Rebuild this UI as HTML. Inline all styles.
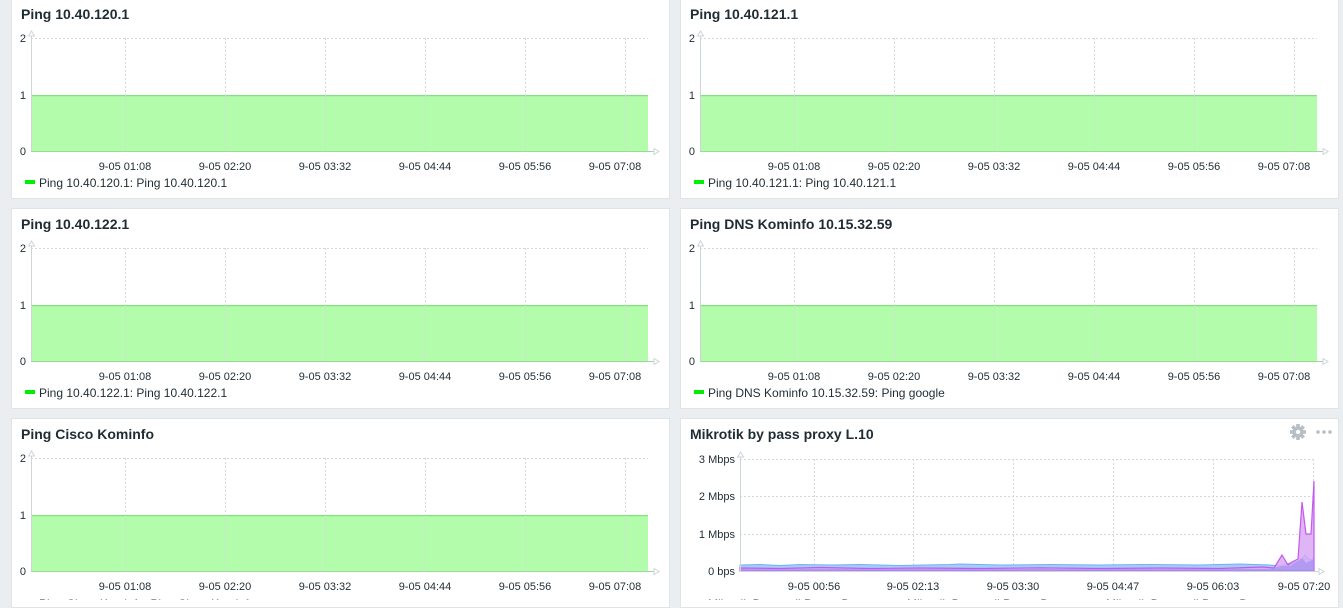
<!DOCTYPE html>
<html><head><meta charset="utf-8">
<style>
html,body{margin:0;padding:0;}
body{width:1343px;height:600px;overflow:hidden;background:#ebeef0;position:relative;font-family:"Liberation Sans",Arial,sans-serif;}
.p{position:absolute;background:#fff;border:1px solid #dfe4e7;box-sizing:border-box;}
svg{position:absolute;left:0;top:0;}
text{font-family:"Liberation Sans",Arial,sans-serif;fill:#1f2c33;}
.t{font-size:14px;font-weight:bold;fill:#1f2c33;}
.a{font-size:11px;}
.l{font-size:12px;}
.g{stroke:#d4d8db;stroke-width:1;stroke-dasharray:2,2;fill:none;}
.ax{stroke:#ccd5d9;stroke-width:1;fill:none;}
</style></head><body>
<div class="p" style="left:11px;top:-2px;width:659px;height:201px"></div>
<div class="p" style="left:680px;top:-2px;width:659px;height:201px"></div>
<div class="p" style="left:11px;top:208px;width:659px;height:201px"></div>
<div class="p" style="left:680px;top:208px;width:659px;height:201px"></div>
<div class="p" style="left:11px;top:418px;width:659px;height:190px"></div>
<div class="p" style="left:680px;top:418px;width:659px;height:190px"></div>
<svg width="1343" height="600" viewBox="0 0 1343 600">
<defs>
<g id="ping">
<line class="g" x1="31" y1="38.5" x2="648" y2="38.5"/>
<rect x="31" y="95" width="617" height="56" fill="#b3fcab"/>
<rect x="31" y="95" width="617" height="1.2" fill="#7fe27a"/>
<line class="g" x1="125.5" y1="38" x2="125.5" y2="151"/>
<line class="g" x1="225.5" y1="38" x2="225.5" y2="151"/>
<line class="g" x1="325.5" y1="38" x2="325.5" y2="151"/>
<line class="g" x1="425.5" y1="38" x2="425.5" y2="151"/>
<line class="g" x1="525.5" y1="38" x2="525.5" y2="151"/>
<line class="g" x1="625.5" y1="38" x2="625.5" y2="151"/>
<line class="ax" x1="31.5" y1="34" x2="31.5" y2="151.5"/>
<line x1="31" y1="151.5" x2="655" y2="151.5" stroke="#9fd99a"/>
<path d="M28.5,36 L31.5,31 L34.5,36 Z" fill="#fff" stroke="#ccd5d9"/>
<path d="M654,148.5 L659,151.5 L654,154.5 Z" fill="#fff" stroke="#ccd5d9"/>
<text class="a" x="26" y="42" text-anchor="end">2</text>
<text class="a" x="26" y="99" text-anchor="end">1</text>
<text class="a" x="26" y="155" text-anchor="end">0</text>
<text class="a" x="125" y="170" text-anchor="middle">9-05 01:08</text>
<text class="a" x="225" y="170" text-anchor="middle">9-05 02:20</text>
<text class="a" x="325" y="170" text-anchor="middle">9-05 03:32</text>
<text class="a" x="425" y="170" text-anchor="middle">9-05 04:44</text>
<text class="a" x="525" y="170" text-anchor="middle">9-05 05:56</text>
<text class="a" x="615" y="170" text-anchor="middle">9-05 07:08</text>
<rect x="25" y="180" width="10" height="4" fill="#00ee00"/>
</g>
</defs>
<use href="#ping" x="0" y="0"/>
<use href="#ping" x="669" y="0"/>
<use href="#ping" x="0" y="210"/>
<use href="#ping" x="669" y="210"/>
<use href="#ping" x="0" y="420"/>
<text class="t" x="21" y="19">Ping 10.40.120.1</text>
<text class="t" x="690" y="19">Ping 10.40.121.1</text>
<text class="t" x="21" y="229">Ping 10.40.122.1</text>
<text class="t" x="690" y="229">Ping DNS Kominfo 10.15.32.59</text>
<text class="t" x="21" y="439">Ping Cisco Kominfo</text>
<text class="t" x="690" y="439">Mikrotik by pass proxy L.10</text>
<text class="l" x="39" y="187">Ping 10.40.120.1: Ping 10.40.120.1</text>
<text class="l" x="708" y="187">Ping 10.40.121.1: Ping 10.40.121.1</text>
<text class="l" x="39" y="397">Ping 10.40.122.1: Ping 10.40.122.1</text>
<text class="l" x="708" y="397">Ping DNS Kominfo 10.15.32.59: Ping google</text>
<text class="l" x="39" y="608">Ping Cisco Kominfo: Ping Cisco Kominfo</text>
<rect x="25" y="600" width="10" height="4" fill="#00ee00"/>
<line class="g" x1="740" y1="459.5" x2="1314" y2="459.5"/>
<line class="g" x1="740" y1="496.5" x2="1314" y2="496.5"/>
<line class="g" x1="740" y1="534.5" x2="1314" y2="534.5"/>
<line class="g" x1="814.5" y1="459" x2="814.5" y2="571"/>
<line class="g" x1="913.5" y1="459" x2="913.5" y2="571"/>
<line class="g" x1="1013.5" y1="459" x2="1013.5" y2="571"/>
<line class="g" x1="1113.5" y1="459" x2="1113.5" y2="571"/>
<line class="g" x1="1213.5" y1="459" x2="1213.5" y2="571"/>
<line class="g" x1="1313.5" y1="459" x2="1313.5" y2="571"/>
<path d="M740,565 L760,564.5 L780,565.5 L800,564.5 L830,565 L860,564.5 L900,565.5 L950,564.5 L960,564 L1000,565 L1050,564.5 L1100,565 L1150,564.5 L1200,565 L1240,564 L1270,565 L1280,566 L1290,563 L1300,562 L1305,555 L1310,560 L1314,558 L1314,571 L740,571 Z" fill="#a6cdf7" stroke="#6fb2f5" stroke-width="1"/>
<path d="M740,568 L780,568.5 L820,567.5 L870,568.5 L920,568 L980,568.5 L1040,567.8 L1100,568.5 L1160,568 L1220,568.5 L1262,567 L1274,568 L1282,555 L1288,565 L1292,562 L1298,559 L1302,502 L1306,534 L1311,534 L1314,481 L1314,571 L740,571 Z" fill="#d9a8f5" fill-opacity="0.85" stroke="#c25af0" stroke-width="1.2"/>
<path d="M740,569 L1270,569 L1282,566 L1290,566 L1296,562 L1302,558 L1306,563 L1314,559 L1314,571 L740,571 Z" fill="#9b8ef0" fill-opacity="0.6"/>
<line class="ax" x1="740.5" y1="455" x2="740.5" y2="571.5"/>
<line class="ax" x1="740" y1="571.5" x2="1320" y2="571.5"/>
<path d="M737.5,457 L740.5,452 L743.5,457 Z" fill="#fff" stroke="#ccd5d9"/>
<path d="M1319,568.5 L1324,571.5 L1319,574.5 Z" fill="#fff" stroke="#ccd5d9"/>
<text class="a" x="735" y="463" text-anchor="end">3 Mbps</text>
<text class="a" x="735" y="500" text-anchor="end">2 Mbps</text>
<text class="a" x="735" y="538" text-anchor="end">1 Mbps</text>
<text class="a" x="735" y="575" text-anchor="end">0 bps</text>
<text class="a" x="814" y="590" text-anchor="middle">9-05 00:56</text>
<text class="a" x="913" y="590" text-anchor="middle">9-05 02:13</text>
<text class="a" x="1013" y="590" text-anchor="middle">9-05 03:30</text>
<text class="a" x="1113" y="590" text-anchor="middle">9-05 04:47</text>
<text class="a" x="1213" y="590" text-anchor="middle">9-05 06:03</text>
<text class="a" x="1304" y="590" text-anchor="middle">9-05 07:20</text>
<text class="l" x="708" y="608">Mikrotik Bypass li Proxy: Bypass</text>
<text class="l" x="907" y="608">Mikrotik Bypass li Proxy: Bypass</text>
<text class="l" x="1106" y="608">Mikrotik Bypass li Proxy: Bypass</text>
<g transform="translate(1298,432)" fill="#b7bfc4">
<circle r="5.5"/>
<rect x="-1.8" y="-8" width="3.6" height="16"/>
<rect x="-1.8" y="-8" width="3.6" height="16" transform="rotate(45)"/>
<rect x="-1.8" y="-8" width="3.6" height="16" transform="rotate(90)"/>
<rect x="-1.8" y="-8" width="3.6" height="16" transform="rotate(135)"/>
<circle r="2.2" fill="#fff"/>
</g>
<circle cx="1318" cy="432" r="1.8" fill="#b7bfc4"/>
<circle cx="1324" cy="432" r="1.8" fill="#b7bfc4"/>
<circle cx="1330" cy="432" r="1.8" fill="#b7bfc4"/>
</svg>
</body></html>
